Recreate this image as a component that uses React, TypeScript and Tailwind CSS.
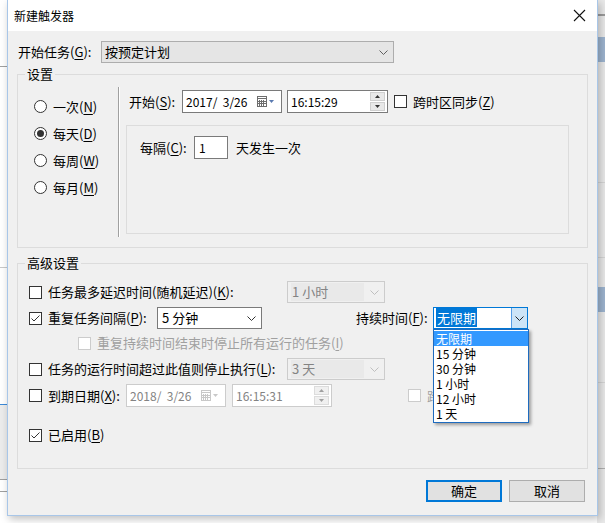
import React from "react";

const FONT = "font-['Noto_Sans_CJK_SC','Noto_Sans',sans-serif]";

function U({ children }: { children: React.ReactNode }) {
  return <span className="underline underline-offset-2 decoration-1">{children}</span>;
}

function Chevron({ color = "#606060" }: { color?: string }) {
  return (
    <svg width="9" height="5" viewBox="0 0 9 5">
      <path d="M0.5 0.5 L4.5 4.5 L8.5 0.5" fill="none" stroke={color} strokeWidth="1" />
    </svg>
  );
}

function Check({ checked = false, disabled = false }: { checked?: boolean; disabled?: boolean }) {
  return (
    <span
      className={`flex h-[13px] w-[13px] shrink-0 items-center justify-center border bg-white ${
        disabled ? "border-[#cccccc]" : "border-[#333333]"
      }`}
    >
      {checked && (
        <svg width="11" height="11" viewBox="0 0 11 11">
          <path d="M1.5 5.5 L4 8 L9.5 2.5" fill="none" stroke="#333" strokeWidth="1" />
        </svg>
      )}
    </span>
  );
}

function Radio({ checked = false }: { checked?: boolean }) {
  return (
    <span className="flex h-[13px] w-[13px] shrink-0 items-center justify-center rounded-full border border-[#333333] bg-white">
      {checked && <span className="h-[7px] w-[7px] rounded-full bg-[#333333]" />}
    </span>
  );
}

function Select({ text, width, disabled = false }: { text: string; width: string; disabled?: boolean }) {
  return (
    <div
      className={`flex h-[22px] shrink-0 items-center justify-between border pl-[3px] pr-[5px] ${width} ${
        disabled ? "border-[#cccccc] bg-[#f0f0f0] text-[#838383]" : "border-[#7a7a7a] bg-white text-black"
      }`}
    >
      <span className={`flex h-[18px] flex-1 items-center pl-[1px] ${disabled ? "bg-[#e9e9e9]" : ""}`}>{text}</span>
      <span className="ml-[6px] flex items-center">
        <Chevron color={disabled ? "#bfbfbf" : "#333333"} />
      </span>
    </div>
  );
}

function DateBox({ text, disabled = false }: { text: string; disabled?: boolean }) {
  const c = disabled ? "#c8c8c8" : "#6d6d6d";
  return (
    <div
      className={`flex h-[23px] w-[100px] shrink-0 items-center border bg-white pl-[3px] pr-[7px] ${
        disabled ? "border-[#cccccc] text-[#838383]" : "border-[#7a7a7a] text-black"
      }`}
    >
      <span className="flex-1 whitespace-pre text-[12px]">{text}</span>
      <svg width="17" height="11" viewBox="0 0 17 11">
        <rect x="0.5" y="0.5" width="9" height="10" fill="#fff" stroke={c} />
        <path d="M0.5 2.5 H9.5 M2.5 4 V10 M4.5 4 V10 M6.5 4 V10 M1 5.5 H9 M1 7.5 H9" stroke={c} strokeWidth="1" />
        <path d="M12 4 L17 4 L14.5 7 Z" fill={disabled ? "#c8c8c8" : "#5a7ab0"} />
      </svg>
    </div>
  );
}

function TimeBox({ text, disabled = false, width }: { text: string; disabled?: boolean; width: string }) {
  return (
    <div
      className={`flex h-[23px] shrink-0 items-center border bg-white pl-[3px] pr-[2px] ${width} ${
        disabled ? "border-[#cccccc] text-[#838383]" : "border-[#7a7a7a] text-black"
      }`}
    >
      <span className="flex-1 text-[12px]">{text}</span>
      <div className="flex flex-col gap-[1px]">
        {[0, 1].map((i) => (
          <span
            key={i}
            className={`flex h-[9px] w-[15px] items-center justify-center border ${
              disabled ? "border-[#dcdcdc] bg-[#f0f0f0]" : "border-[#cfcfcf] bg-[#e8e8e8]"
            }`}
          >
            <svg width="5" height="3" viewBox="0 0 5 3">
              <path d={i === 0 ? "M0 3 L2.5 0 L5 3 Z" : "M0 0 L2.5 3 L5 0 Z"} fill={disabled ? "#a0a0a0" : "#333"} />
            </svg>
          </span>
        ))}
      </div>
    </div>
  );
}

export default function App() {
  return (
    <div className={`relative h-[523px] w-[605px] overflow-hidden bg-white text-[13px] text-black ${FONT}`}>
      {/* parent window peeking out behind the dialog */}
      <div className="absolute left-0 top-[66px] h-px w-[8px] bg-[#a0a0a0]" />
      <div className="absolute left-0 top-[267px] h-px w-[8px] bg-[#c8c8c8]" />
      <div className="absolute left-0 top-[404px] h-[2px] w-[8px] bg-[#3c8ad8]" />
      <div className="absolute left-0 top-[405px] h-[75px] w-[8px] bg-[#ececec]" />
      <div className="absolute left-0 top-[479px] h-px w-[8px] bg-[#a0a0a0]" />
      <div className="absolute left-0 top-[491px] h-px w-[8px] bg-[#a0a0a0]" />
      <div className="absolute right-0 top-0 h-[523px] w-[8px] bg-[#e9e9e9]" />
      <div className="absolute right-0 top-[14px] h-[2px] w-[8px] bg-[#9a9a9a]" />
      <div className="absolute right-0 top-[37px] h-[25px] w-[8px] bg-[#9db4cf]" />
      <div className="absolute right-0 top-[287px] h-[25px] w-[8px] bg-[#9db4cf]" />
      <div className="absolute right-0 top-[182px] h-px w-[8px] bg-[#d5d5d5]" />
      <div className="absolute right-0 top-[257px] h-px w-[8px] bg-[#d5d5d5]" />
      <div className="absolute right-0 top-[382px] h-px w-[8px] bg-[#d5d5d5]" />
      <div className="absolute right-0 top-[468px] h-px w-[8px] bg-[#b0b0b0]" />

      {/* dialog window */}
      <div className="absolute left-[7px] top-0 flex h-[516px] w-[591px] flex-col border-x border-b border-[#a8c6e8] bg-[#f0f0f0] shadow-[2px_3px_8px_rgba(0,0,0,0.25)]">
        <div className="flex h-[31px] items-center justify-between bg-white pl-[6px] pr-[8px]">
          <span className="text-[12px]">新建触发器</span>
          <svg width="13" height="13" viewBox="0 0 13 13" className="mr-[3px]">
            <path d="M1 1 L12 12 M12 1 L1 12" stroke="#111" strokeWidth="1.1" />
          </svg>
        </div>

        <div className="flex flex-col">
          <div className="mt-[10px] flex h-[22px] items-center pl-[10px]">
            <span className="w-[83px] shrink-0 whitespace-nowrap">
              开始任务(<U>G</U>):
            </span>
            <div className="flex h-[22px] w-[293px] items-center justify-between border border-[#adadad] bg-[#e5e5e5] pl-[3px] pr-[5px]">
              <span>按预定计划</span>
              <Chevron />
            </div>
          </div>

          {/* 设置 */}
          <div className="relative ml-[9px] mt-[11px] flex h-[174px] w-[571px] border border-[#dcdcdc]">
            <span className="absolute left-[7px] top-[-10px] bg-[#f0f0f0] px-[2px] leading-[17px]">设置</span>
            <div className="flex w-[100px] flex-col pl-[16px] pt-[18px]">
              {[
                ["一次", "N", false],
                ["每天", "D", true],
                ["每周", "W", false],
                ["每月", "M", false],
              ].map(([t, k, c]) => (
                <div key={k as string} className="flex h-[27px] items-center gap-[6px]">
                  <Radio checked={c as boolean} />
                  <span>
                    {t as string}(<U>{k as string}</U>)
                  </span>
                </div>
              ))}
            </div>
            <div className="mt-[12px] h-[150px] w-[2px] border-l border-r border-l-[#a0a0a0] border-r-white" />
            <div className="flex flex-col">
              <div className="ml-[9px] mt-[15px] flex h-[23px] items-center">
                <span className="w-[53px] shrink-0 whitespace-nowrap">
                  开始(<U>S</U>):
                </span>
                <DateBox text="2017/  3/26" />
                <div className="ml-[5px]">
                  <TimeBox text="16:15:29" width="w-[101px]" />
                </div>
                <div className="ml-[6px]">
                  <Check />
                </div>
                <span className="ml-[6px] whitespace-nowrap">
                  跨时区同步(<U>Z</U>)
                </span>
              </div>
              <div className="ml-[6px] mt-[12px] flex h-[109px] w-[443px] flex-col border border-[#dcdcdc]">
                <div className="ml-[13px] mt-[10px] flex h-[23px] items-center">
                  <span className="w-[54px] shrink-0 whitespace-nowrap">
                    每隔(<U>C</U>):
                  </span>
                  <div className="flex h-[23px] w-[34px] items-center border border-[#7a7a7a] bg-white pl-[4px] text-[12px]">
                    1
                  </div>
                  <span className="ml-[8px]">天发生一次</span>
                </div>
              </div>
            </div>
          </div>

          {/* 高级设置 */}
          <div className="relative ml-[9px] mt-[15px] flex h-[206px] w-[571px] flex-col border border-[#dcdcdc] pl-[11px]">
            <span className="absolute left-[7px] top-[-10px] bg-[#f0f0f0] px-[2px] leading-[17px]">高级设置</span>

            <div className="mt-[17px] flex h-[22px] items-center">
              <div className="flex w-[258px] shrink-0 items-center gap-[6px] whitespace-nowrap">
                <Check />
                <span>
                  任务最多延迟时间(随机延迟)(<U>K</U>):
                </span>
              </div>
              <Select text="1 小时" width="w-[98px]" disabled />
            </div>

            <div className="mt-[4px] flex h-[22px] items-center">
              <div className="flex w-[128px] shrink-0 items-center gap-[6px] whitespace-nowrap">
                <Check checked />
                <span>
                  重复任务间隔(<U>P</U>):
                </span>
              </div>
              <Select text="5 分钟" width="w-[105px]" />
              <span className="ml-[94px] w-[77px] shrink-0 whitespace-nowrap">
                持续时间(<U>F</U>):
              </span>
              <div className="flex h-[22px] w-[95px] shrink-0 items-center border border-[#0078d7] bg-white">
                <span className="ml-[2px] flex-1">
                  <span className="bg-[#0078d7] px-[1px] text-white">无限期</span>
                </span>
                <span className="flex h-[20px] w-[16px] items-center justify-center border-l border-[#569de5] bg-[#cce4f7]">
                  <Chevron color="#222" />
                </span>
              </div>
            </div>

            <div className="mt-[5px] flex h-[18px] items-center gap-[6px] whitespace-nowrap pl-[49px] text-[#a0a0a0]">
              <Check disabled />
              <span>
                重复持续时间结束时停止所有运行的任务(<U>I</U>)
              </span>
            </div>

            <div className="mt-[6px] flex h-[22px] items-center">
              <div className="flex w-[258px] shrink-0 items-center gap-[6px] whitespace-nowrap">
                <Check />
                <span>
                  任务的运行时间超过此值则停止执行(<U>L</U>):
                </span>
              </div>
              <Select text="3 天" width="w-[98px]" disabled />
            </div>

            <div className="mt-[4px] flex h-[23px] items-center">
              <div className="flex w-[97px] shrink-0 items-center gap-[6px] whitespace-nowrap">
                <Check />
                <span>
                  到期日期(<U>X</U>):
                </span>
              </div>
              <DateBox text="2018/  3/26" disabled />
              <div className="ml-[6px]">
                <TimeBox text="16:15:31" width="w-[100px]" disabled />
              </div>
              <div className="ml-[76px]">
                <Check disabled />
              </div>
              {/* label mostly hidden under the open list */}
              <span className="ml-[6px] w-[7px] overflow-hidden whitespace-nowrap text-[#a0a0a0]">跨</span>
            </div>

            <div className="mt-[19px] flex h-[18px] items-center gap-[6px]">
              <Check checked />
              <span>
                已启用(<U>B</U>)
              </span>
            </div>
          </div>

          <div className="mt-[11px] flex justify-end gap-[7px] pr-[12px]">
            <button className="flex h-[22px] w-[76px] items-center justify-center border-2 border-[#0078d7] bg-[#e1e1e1]">
              确定
            </button>
            <button className="flex h-[22px] w-[76px] items-center justify-center border border-[#adadad] bg-[#e1e1e1]">
              取消
            </button>
          </div>
        </div>
      </div>

      {/* open dropdown list of 持续时间 */}
      <div className="absolute left-[433px] top-[329px] flex w-[96px] flex-col border border-[#1e6bbf] bg-white py-[1px] text-[12px] leading-[15px] shadow-[2px_2px_3px_rgba(0,0,0,0.35)]">
        {["无限期", "15 分钟", "30 分钟", "1 小时", "12 小时", "1 天"].map((t, i) => (
          <span key={t} className={`h-[15px] pl-[2px] ${i === 0 ? "bg-[#3399ff] text-white" : "text-black"}`}>
            {t}
          </span>
        ))}
      </div>
    </div>
  );
}
